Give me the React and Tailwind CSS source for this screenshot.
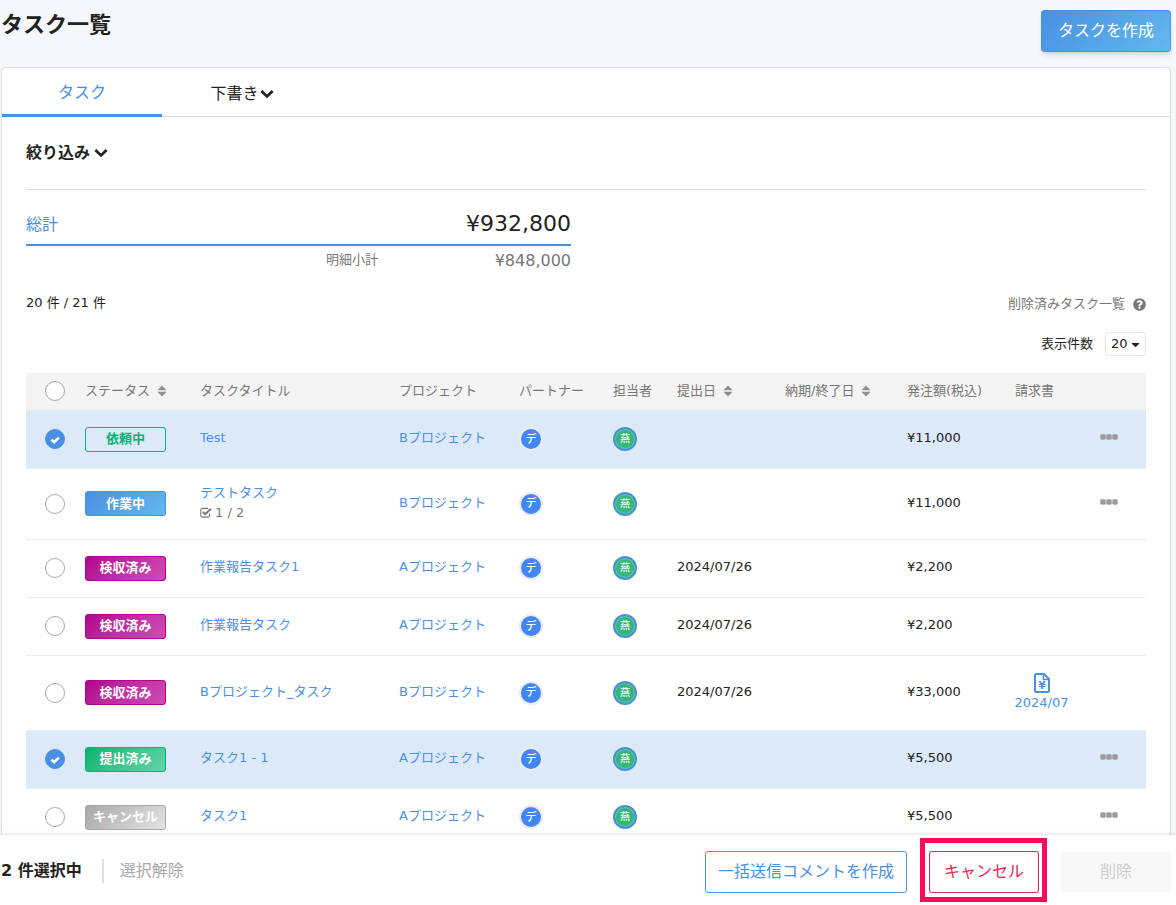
import { useState } from 'react';
import { FaCaretDown, FaQuestionCircle } from 'react-icons/fa';

const STATUS_STYLES = {
    依頼中: 'border-[#00b371] text-[#00b371]',
    作業中: 'border-[#4a90e2] bg-linear-135 from-[#4a90e2] to-[#63b8ee] text-white',
    検収済み: 'border-[#b0008e] bg-linear-135 from-[#b0008e] to-[#d04ab5] text-white',
    提出済み: 'border-[#00b371] bg-linear-135 from-[#00b371] to-[#60d4a7] text-white',
    キャンセル: 'border-[#a8a8a8] bg-linear-135 from-[#a8a8a8] to-[#e4e4e4] text-white',
};

const TASKS = [
    { id: 1, status: '依頼中', title: 'Test', project: 'Bプロジェクト', amount: '¥11,000', menu: true, height: 'h-[58px]' },
    { id: 2, status: '作業中', title: 'テストタスク', progress: '1 / 2', project: 'Bプロジェクト', amount: '¥11,000', menu: true, height: 'h-[71px]' },
    { id: 3, status: '検収済み', title: '作業報告タスク1', project: 'Aプロジェクト', submitted: '2024/07/26', amount: '¥2,200', height: 'h-[58px]' },
    { id: 4, status: '検収済み', title: '作業報告タスク', project: 'Aプロジェクト', submitted: '2024/07/26', amount: '¥2,200', height: 'h-[58px]' },
    { id: 5, status: '検収済み', title: 'Bプロジェクト_タスク', project: 'Bプロジェクト', submitted: '2024/07/26', amount: '¥33,000', invoice: '2024/07', height: 'h-[75px]' },
    { id: 6, status: '提出済み', title: 'タスク1 - 1', project: 'Aプロジェクト', amount: '¥5,500', menu: true, height: 'h-[58px]' },
    { id: 7, status: 'キャンセル', title: 'タスク1', project: 'Aプロジェクト', amount: '¥5,500', menu: true, height: 'h-[58px]' },
];

const RoundCheckbox = ({ label, checked, onChange }) => (
    <span className="relative block size-5">
        <input
            type="checkbox"
            aria-label={label}
            checked={checked}
            onChange={onChange}
            className="block size-5 appearance-none rounded-full border border-[#a8a8a8] bg-white checked:border-[#4a90e2] checked:bg-[#4a90e2]"
        />
        {checked && (
            <svg viewBox="0 0 10 8" fill="none" stroke="#fff" strokeWidth="2.6" className="pointer-events-none absolute top-[7px] left-[5px] h-2 w-2.5" aria-hidden="true">
                <path d="M1.4 3.6 4.2 6.2 8.8 1.6" />
            </svg>
        )}
    </span>
);

const ChevronIcon = () => (
    <svg width="14" height="10" viewBox="0 0 14 10" fill="none" stroke="currentColor" strokeWidth="2.8" aria-hidden="true">
        <path d="M1.4 2 7 7.4 12.6 2" />
    </svg>
);

const SortIcon = () => (
    <svg width="10" height="12" viewBox="0 0 10 12" fill="#8c8f93" aria-hidden="true">
        <path d="M5 0.4 9.6 5.3H.4Z" />
        <path d="M5 11.6.4 6.7H9.6Z" />
    </svg>
);

const DotsIcon = () => (
    <svg width="18" height="6" viewBox="0 0 18 6" fill="#999b9f" aria-hidden="true">
        <rect x="0.3" y="0.3" width="5.4" height="5.4" rx="1.4" />
        <rect x="6.3" y="0.3" width="5.4" height="5.4" rx="1.4" />
        <rect x="12.3" y="0.3" width="5.4" height="5.4" rx="1.4" />
    </svg>
);

const CheckSquareIcon = () => (
    <svg width="12" height="11" viewBox="0 0 12 11" fill="none" stroke="#777" aria-hidden="true">
        <path d="M9.5 6.4V8.6a1.5 1.5 0 0 1-1.5 1.5H2.3A1.5 1.5 0 0 1 .8 8.6V2.9a1.5 1.5 0 0 1 1.5-1.5H8" strokeWidth="1.1" />
        <path d="M2.9 4.9 5.2 7.2 10.9 1.7" strokeWidth="2" />
    </svg>
);

const InvoiceIcon = () => (
    <svg width="16" height="20" viewBox="0 0 16 20" fill="none" stroke="#4a90e2" strokeWidth="2" aria-hidden="true">
        <path d="M2.5 1H10l5 5v11.5a1.5 1.5 0 0 1-1.5 1.5h-11A1.5 1.5 0 0 1 1 17.5v-15A1.5 1.5 0 0 1 2.5 1Z" />
        <path d="M9.5 1v5.5H15" strokeWidth="1.5" />
        <text x="8" y="16" textAnchor="middle" fill="#4a90e2" stroke="none" fontSize="10" fontWeight="700">¥</text>
    </svg>
);

const SortHeader = ({ children }) => (
    <button type="button" className="flex items-center gap-[7px] whitespace-nowrap">
        {children}
        <SortIcon />
    </button>
);

const TaskRow = ({ task, selected, onToggle }) => (
    <tr className={`${task.height} border-b border-[#ececec] ${selected ? 'bg-[#dce9f9]' : 'bg-white'}`}>
        <td className="pl-[19px]">
            <RoundCheckbox label={`${task.title}を選択`} checked={selected} onChange={onToggle} />
        </td>
        <td className="px-2">
            <span className={`flex h-[25px] w-[81px] items-center justify-center rounded-[3px] border font-bold ${STATUS_STYLES[task.status]}`}>
                {task.status}
            </span>
        </td>
        <td className="px-2 pb-0.5">
            <a href="#task" className="text-[#4a90e2]">{task.title}</a>
            {task.progress && (
                <p className="flex items-center gap-[3px] text-[#777]">
                    <CheckSquareIcon />
                    {task.progress}
                </p>
            )}
        </td>
        <td className="px-2 pb-0.5">
            <a href="#project" className="text-[#4a90e2]">{task.project}</a>
        </td>
        <td className="px-2">
            <span className="flex size-6 items-center justify-center rounded-full border-2 border-[#ececec] bg-[#4285f4] text-[11px] leading-none font-medium text-white">デ</span>
        </td>
        <td className="px-2">
            <span className="flex size-6 items-center justify-center rounded-full border-2 border-[#4a90e2] bg-[#33b679] text-[10px] leading-none font-medium text-white inset-ring inset-ring-white/25">燕</span>
        </td>
        <td className="px-2 pb-0.5">{task.submitted}</td>
        <td className="px-2 pb-0.5" />
        <td className="px-2 pb-0.5">{task.amount}</td>
        <td className="px-2">
            {task.invoice && (
                <a href="#invoice" className="flex w-[53px] flex-col items-center text-[#4a90e2]">
                    <InvoiceIcon />
                    {task.invoice}
                </a>
            )}
        </td>
        <td className="pb-1 pl-[9px]">
            {task.menu && (
                <button type="button" aria-label="メニュー" className="flex h-5 items-center">
                    <DotsIcon />
                </button>
            )}
        </td>
    </tr>
);

export default function App() {
    const [selected, setSelected] = useState([1, 6]);

    const toggle = (id) => {
        setSelected(selected.includes(id) ? selected.filter(s => s !== id) : [...selected, id]);
    };

    const toggleAll = () => {
        setSelected(selected.length === TASKS.length ? [] : TASKS.map(t => t.id));
    };

    return (
        <div className="flex h-screen flex-col bg-[#f5f7fb] font-['DejaVu_Sans','Noto_Sans_CJK_JP',sans-serif] text-[13px] leading-5 text-[#222]">
            <main className="min-h-0 flex-1 overflow-y-auto pr-[5px] pl-px [scrollbar-width:none]">
                <header className="flex h-[67px] items-start justify-between">
                    <h1 className="pt-[9px] text-[22px] leading-8 font-bold">タスク一覧</h1>
                    <button type="button" className="mt-2.5 h-[42px] rounded-[3px] border border-[#4a90e2] bg-linear-135 from-[#4a90e2] to-[#63b8ee] px-4 text-base text-white shadow-md">
                        タスクを作成
                    </button>
                </header>

                <section className="rounded-t border border-[#dcdee2] bg-white">
                    <nav className="flex h-[49px] border-b border-[#dcdee2] text-base">
                        <a href="#tasks" className="flex h-[49px] w-40 items-center justify-center border-b-[3px] border-[#4a90e2] pt-1 text-[#4a90e2]">タスク</a>
                        <button type="button" className="flex w-40 items-center justify-center gap-px pt-1">
                            下書き
                            <ChevronIcon />
                        </button>
                    </nav>

                    <div className="px-6">
                        <div className="flex h-[73px] items-center border-b border-[#dcdee2]">
                            <button type="button" className="flex items-center gap-1 text-base font-bold">
                                絞り込み
                                <ChevronIcon />
                            </button>
                        </div>

                        <dl className="w-[545px] pt-4">
                            <div className="flex h-10 items-center justify-between border-b-2 border-[#4a90e2]">
                                <dt className="text-base text-[#4a90e2]">総計</dt>
                                <dd className="pb-0.5 text-[22px]">¥932,800</dd>
                            </div>
                            <div className="flex h-[30px] items-center justify-between text-[#777]">
                                <dt className="ml-[300px] pb-0.5">明細小計</dt>
                                <dd className="text-base">¥848,000</dd>
                            </div>
                        </dl>

                        <div className="flex items-center justify-between pt-4">
                            <p>20 件 / 21 件</p>
                            <a href="#deleted" className="flex items-center gap-2 pt-0.5 text-[#777]">
                                削除済みタスク一覧
                                <FaQuestionCircle className="size-[13px]" />
                            </a>
                        </div>
                        <div className="flex items-center justify-end gap-3 pt-[18px] pb-[17px]">
                            <label htmlFor="perPage">表示件数</label>
                            <span className="relative">
                                <select id="perPage" defaultValue="20" className="block h-6 w-[41px] appearance-none rounded-[3px] border border-[#e2e4e8] bg-white pl-[5px]">
                                    <option>20</option>
                                    <option>50</option>
                                    <option>100</option>
                                </select>
                                <FaCaretDown className="pointer-events-none absolute top-1.5 right-1 size-[13px]" />
                            </span>
                        </div>

                        <table className="w-full table-fixed border-collapse">
                            <colgroup>
                                <col className="w-[51px]" />
                                <col className="w-[115px]" />
                                <col />
                                <col className="w-[120px]" />
                                <col className="w-[94px]" />
                                <col className="w-[64px]" />
                                <col className="w-[108px]" />
                                <col className="w-[122px]" />
                                <col className="w-[108px]" />
                                <col className="w-[84px]" />
                                <col className="w-[55px]" />
                            </colgroup>
                            <thead>
                                <tr className="h-[37px] border-b-2 border-[#ececec] bg-[#f4f4f4] text-left text-[#777]">
                                    <th className="pl-[19px]">
                                        <RoundCheckbox label="すべて選択" checked={selected.length === TASKS.length} onChange={toggleAll} />
                                    </th>
                                    <th className="px-2 font-normal"><SortHeader>ステータス</SortHeader></th>
                                    <th className="px-2 font-normal">タスクタイトル</th>
                                    <th className="px-2 font-normal">プロジェクト</th>
                                    <th className="px-2 font-normal">パートナー</th>
                                    <th className="pl-2 font-normal">担当者</th>
                                    <th className="px-2 font-normal"><SortHeader>提出日</SortHeader></th>
                                    <th className="px-2 font-normal"><SortHeader>納期/終了日</SortHeader></th>
                                    <th className="px-2 font-normal">発注額(税込)</th>
                                    <th className="px-2 font-normal">請求書</th>
                                    <th />
                                </tr>
                            </thead>
                            <tbody>
                                {TASKS.map(task => (
                                    <TaskRow key={task.id} task={task} selected={selected.includes(task.id)} onToggle={() => toggle(task.id)} />
                                ))}
                            </tbody>
                        </table>
                    </div>
                </section>
            </main>

            {/* 一括操作バー */}
            <footer className="relative flex h-[70px] shrink-0 items-center justify-between bg-white pt-1 pr-[5px] pl-px text-base shadow-[0_0_4px_rgba(0,0,0,0.2)]">
                <div className="flex items-center pb-0.5">
                    <p className="font-bold">{selected.length} 件選択中</p>
                    <span className="mx-4 ml-5 h-6 w-0.5 bg-[#dcdfe4]" />
                    <button type="button" onClick={() => setSelected([])} className="text-[#a8a8a8]">選択解除</button>
                </div>
                <div className="flex items-center gap-[22px]">
                    <button type="button" className="h-[42px] rounded-[3px] border border-[#4a90e2] bg-white px-3 text-[#4a90e2]">一括送信コメントを作成</button>
                    <div className="relative">
                        <button type="button" className="block h-[42px] w-[110px] rounded-[3px] border border-[#e0294f] bg-white text-[#e0294f]">キャンセル</button>
                        <span className="pointer-events-none absolute -top-[13px] -right-2 -bottom-[9px] -left-[9px] border-5 border-[#ff0a5b]" />
                    </div>
                    <button type="button" disabled className="h-10 w-[110px] rounded-[3px] bg-[#f8f8f8] text-[#ccc]">削除</button>
                </div>
            </footer>
        </div>
    );
}
